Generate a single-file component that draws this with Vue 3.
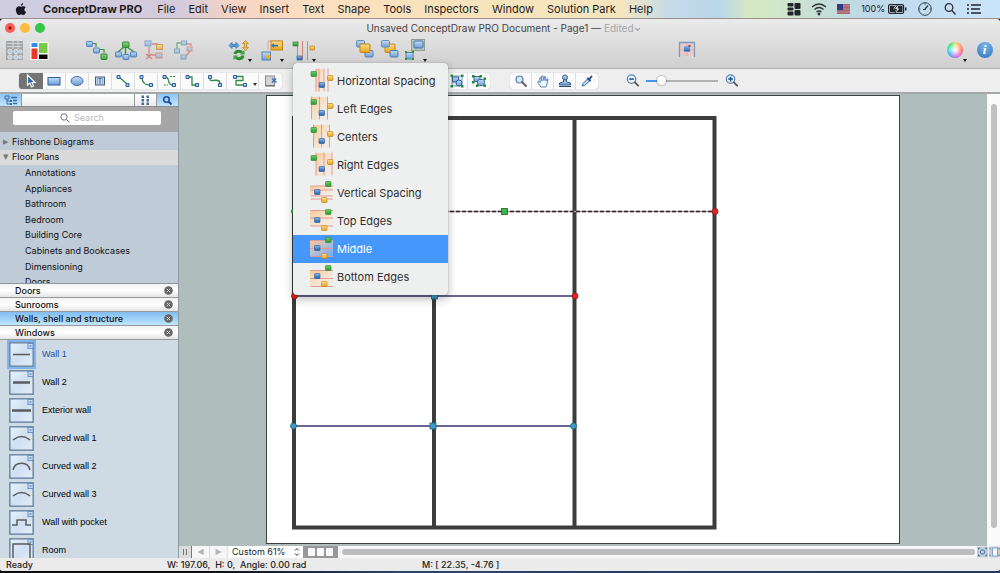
<script setup>
import { ref } from 'vue'

const menus = ['File', 'Edit', 'View', 'Insert', 'Text', 'Shape', 'Tools', 'Inspectors', 'Window', 'Solution Park', 'Help']

const drawTools = [
  ['arrow', 'Select'], ['rect', 'Rectangle'], ['ellipse', 'Ellipse'], ['textbox', 'Text box'],
  ['c1', 'Direct connector'], ['c2', 'Arc connector'], ['c3', 'Bezier connector'],
  ['c4', 'Smart connector'], ['c5', 'Curve connector'], ['c6', 'Round connector'], ['insert', 'Insert page'],
]
const activeTool = ref('arrow')

const alignItems = [
  { label: 'Horizontal Spacing', dir: 'v', lines: [6, 9, 14, 18] },
  { label: 'Left Edges', dir: 'v', lines: [1.5, 9.5, 17.5] },
  { label: 'Centers', dir: 'v', lines: [3.5, 11.5, 19.5] },
  { label: 'Right Edges', dir: 'v', lines: [6, 14, 22] },
  { label: 'Vertical Spacing', dir: 'h', lines: [5, 9, 15, 18] },
  { label: 'Top Edges', dir: 'h', lines: [1.5, 9, 17] },
  { label: 'Middle', dir: 'h', lines: [3.5, 11.5, 19.5] },
  { label: 'Bottom Edges', dir: 'h', lines: [5.5, 13.5, 21.5] },
]
const hovered = ref('Middle')

const treeItems = ['Annotations', 'Appliances', 'Bathroom', 'Bedroom', 'Building Core', 'Cabinets and Bookcases', 'Dimensioning', 'Doors']
const libraries = ['Doors', 'Sunrooms', 'Walls, shell and structure', 'Windows']
const activeLibrary = ref('Walls, shell and structure')

const shapes = [
  { name: 'Wall 1', d: 'M4 12.500H21', w: 1.5 },
  { name: 'Wall 2', d: 'M4 12.500H21', w: 2.5 },
  { name: 'Exterior wall', d: 'M3 12.500H22', w: 2.5 },
  { name: 'Curved wall 1', d: 'M4 14Q12.500 7 21 14', w: 1.5 },
  { name: 'Curved wall 2', d: 'M4 16C6 7 19 7 21 16', w: 1.5 },
  { name: 'Curved wall 3', d: 'M4 14Q12.500 7 21 14', w: 1.5 },
  { name: 'Wall with pocket', d: 'M3 15H8V10H17V15H22', w: 1.5 },
  { name: 'Room', d: 'M4 6H21V21H4Z', w: 1.5 },
]
const activeShape = ref('Wall 1')
const zoom = ref(18)
</script>

<template>
  <div class="screen">
    <svg class="sprite" aria-hidden="true">
      <defs>
        <linearGradient id="gb" x2="0" y2="1"><stop offset="0" stop-color="#c4dcf5" /><stop offset="1" stop-color="#6d9ed3" /></linearGradient>
        <linearGradient id="gg" x2="0" y2="1"><stop offset="0" stop-color="#8fd67c" /><stop offset="1" stop-color="#45a53c" /></linearGradient>
        <linearGradient id="go" x2="0" y2="1"><stop offset="0" stop-color="#ffe08a" /><stop offset="1" stop-color="#e9a21b" /></linearGradient>
        <linearGradient id="gd" x2="0" y2="1"><stop offset="0" stop-color="#8dbbee" /><stop offset="1" stop-color="#1b5fb4" /></linearGradient>
        <linearGradient id="gk" x2="0" y2="1"><stop offset="0" stop-color="#6fcf69" /><stop offset="1" stop-color="#229a2e" /></linearGradient>
        <linearGradient id="gs" x2="1" y2="1"><stop offset="0" stop-color="#f9c792" /><stop offset="1" stop-color="#fbe9d8" stop-opacity=".2" /></linearGradient>
        <linearGradient id="gt" x2="1" y2="1"><stop offset="0" stop-color="#e9f2fa" /><stop offset=".5" stop-color="#cfe0f2" /><stop offset="1" stop-color="#e3edf8" /></linearGradient>
      </defs>

      <symbol id="library" viewBox="0 0 24 24">
        <rect x="4" y="3" width="17" height="19" fill="#a2a4a6" />
        <path d="M5 5.500H20M5 8.500H20M11 3V11M16 3V11" stroke="#d6d7d8" />
        <g fill="#b9cbdc" stroke="#dfe3e6"><circle cx="8" cy="13.500" r="2.200" /><circle cx="14" cy="13.500" r="2.200" /><circle cx="18.500" cy="13.500" r="1.700" /><circle cx="8" cy="19" r="2.200" /><circle cx="14" cy="19" r="2.200" /><circle cx="18.500" cy="19" r="1.700" /></g>
      </symbol>
      <symbol id="solutions" viewBox="0 0 24 24">
        <rect x="3.500" y="4" width="18" height="18" rx="1" fill="#fff" />
        <path d="M4.500 5H10.500V9H4.500Z" fill="#2f8cf0" /><path d="M12 5H20.500V15H12Z" fill="#79c84a" /><path d="M4.500 10.500H10.500V21H4.500Z" fill="#e8382a" /><path d="M12 16.500H20.500V21H12Z" fill="#050505" />
      </symbol>
      <symbol id="chain" viewBox="0 0 24 24">
        <path d="M7 5.500H11V9M14 11.500H19V15" fill="none" stroke="#3f9442" stroke-width="1.200" />
        <g stroke="#4f83bd" fill="url(#gb)"><rect x="1.500" y="3.500" width="6" height="5" rx=".7" /><rect x="8.500" y="10" width="6" height="5" rx=".7" /></g><rect x="16" y="16" width="6" height="5.500" rx=".7" stroke="#2f8a33" fill="url(#gg)" />
      </symbol>
      <symbol id="tree" viewBox="0 0 24 24">
        <path d="M10 9L4 14M11.500 9V16M13 9L20 14" stroke="#3f9442" stroke-width="1.500" />
        <rect x="8.500" y="4" width="6.500" height="5.500" rx=".7" stroke="#2f8a33" fill="url(#gg)" />
        <g stroke="#4f83bd" fill="url(#gb)"><rect x="1.500" y="14" width="6" height="5" rx=".7" /><rect x="9" y="16.500" width="6" height="5" rx=".7" /><rect x="16.500" y="14" width="6" height="5" rx=".7" /></g>
      </symbol>
      <symbol id="swap" viewBox="0 0 24 24">
        <g opacity=".65">
          <path d="M6 9V19M3 16L9 21M9 16L3 21M9 6H15M9 17H15" stroke="#d45b4e" stroke-width="1.300" />
          <rect x="2" y="3" width="6" height="5" stroke="#4f83bd" fill="url(#gb)" /><rect x="13.500" y="6.500" width="6" height="5" stroke="#c58118" fill="url(#go)" /><rect x="13" y="15" width="6" height="5" stroke="#d46a60" fill="url(#gb)" />
        </g>
      </symbol>
      <symbol id="cycle" viewBox="0 0 24 24">
        <g opacity=".6">
          <path d="M15 6H19V8M19 12L14 18H9" fill="none" stroke="#d45b4e" stroke-width="1.300" /><path d="M5 11V5H9" fill="none" stroke="#3f9442" stroke-width="1.300" />
          <g stroke="#4f83bd" fill="url(#gb)"><rect x="9.500" y="3" width="5" height="4" /><rect x="2.500" y="11" width="5" height="4" /><rect x="9" y="17" width="5" height="4" /></g><rect x="15" y="9" width="5" height="4" stroke="#d46a60" fill="url(#gb)" />
        </g>
      </symbol>
      <symbol id="rotate" viewBox="0 0 24 24">
        <path d="M1 7.500L4 4.500V6.500H8V4.500L11 7.500L8 10.500V8.500H4V10.500Z" fill="#5fa5e6" stroke="#1f64a8" stroke-width=".7" />
        <path d="M17.500 2.500L20.500 5.500H18.500V9.500H20.500L17.500 12.500L14.500 9.500H16.500V5.500H14.500Z" fill="#f8c24c" stroke="#b97d12" stroke-width=".7" />
        <path d="M7 16A4 3.500 0 0 1 14 14.500M15 17.500A4 3.500 0 0 1 8 19.500" fill="none" stroke="#318a36" stroke-width="3" /><path d="M12 16.500H16.500V12ZM10 17.500H5.500V22Z" fill="#3da43c" />
      </symbol>
      <symbol id="moveto" viewBox="0 0 24 24">
        <path d="M8 12V3H20" fill="none" stroke="#e0a29c" /><rect x="11" y="3" width="11.500" height="9" fill="url(#go)" stroke="#c58118" /><path d="M11 7.500L14 5V6.700H18V8.500H14V10Z" fill="#2878c0" />
        <rect x="2" y="14" width="8.500" height="8" fill="url(#gb)" stroke="#4f83bd" /><path d="M5 17.500H8V15.500L11 18.500L8 21.500V19.500H5Z" fill="#f5ad27" />
      </symbol>
      <symbol id="alignbtn" viewBox="0 0 24 24">
        <path d="M5.500 3V22M10.500 3V22M15.500 3V22" stroke="#d6817c" /><rect x="1" y="4" width="5" height="4" fill="url(#gk)" stroke="#28762b" stroke-width=".6" /><rect x="18" y="8" width="4.500" height="4" fill="url(#go)" stroke="#b97d12" stroke-width=".6" /><rect x="5" y="18" width="5" height="4" fill="url(#gd)" stroke="#245993" stroke-width=".6" />
      </symbol>
      <symbol id="front" viewBox="0 0 24 24">
        <rect x="3.500" y="2.500" width="8" height="6.500" rx="1" fill="url(#gb)" stroke="#5f8dbd" /><rect x="12" y="12.500" width="8" height="6.500" rx="1" fill="url(#gb)" stroke="#4f7fb1" /><rect x="7" y="6" width="10" height="8.500" rx="1" fill="url(#go)" stroke="#c58118" />
      </symbol>
      <symbol id="back" viewBox="0 0 24 24">
        <rect x="7" y="6" width="10" height="8.500" rx="1" fill="url(#go)" stroke="#c58118" /><rect x="3.500" y="2.500" width="8" height="6.500" rx="1" fill="url(#gb)" stroke="#5f8dbd" /><rect x="12" y="12.500" width="8" height="6.500" rx="1" fill="url(#gb)" stroke="#4f7fb1" />
      </symbol>
      <symbol id="groupbtn" viewBox="0 0 24 24">
        <path d="M3 13L10 12L12 20Z" fill="#f1b99b" opacity=".7" /><rect x="8.500" y="1.500" width="13" height="11" fill="#bbc9bf" stroke="#8d9a91" /><rect x="11" y="3" width="9" height="7" rx="1" fill="url(#gb)" stroke="#3f73ad" />
        <rect x="3" y="14.500" width="7" height="6.500" fill="url(#gb)" stroke="#4f83bd" /><path d="M2 13H4V15H2ZM9 13H11V15H9ZM2 20H4V22H2ZM9 20H11V22H9Z" fill="#2c932f" />
      </symbol>
      <symbol id="presentation" viewBox="0 0 24 24">
        <path d="M5 5H19V18H5Z" fill="#e7c9cb" /><path d="M4.500 19V4.500H19.500V19" fill="none" stroke="#7b9bbd" stroke-width="1.300" /><path d="M4.500 12H19.500M12 5V18" stroke="#d59b9e" stroke-dasharray="1 1" /><rect x="9" y="8" width="6" height="5.500" fill="url(#gd)" /><path d="M13.500 7H15.500V9H13.500Z" fill="#963f55" />
      </symbol>

      <symbol id="arrow" viewBox="0 0 16 16"><path d="M4.500 2V12L7 10L8.500 14L10.500 13L9 9.500H12Z" fill="#2f62a8" stroke="#f4f8fc" stroke-width="1.200" /></symbol>
      <symbol id="rect" viewBox="0 0 16 16"><rect x="2" y="4.500" width="12" height="7.500" fill="url(#gb)" stroke="#2d5f9c" /></symbol>
      <symbol id="ellipse" viewBox="0 0 16 16"><ellipse cx="8" cy="8" rx="6" ry="4.500" fill="url(#gb)" stroke="#3c70ac" /></symbol>
      <symbol id="textbox" viewBox="0 0 16 16"><rect x="3.500" y="4" width="9" height="8" fill="#c4d7ea" stroke="#44617f" /><path d="M6.500 5.500H9.500M8 5.500V11" stroke="#3975b8" /><path d="M5.500 4V12M10.500 4V12" stroke="#7c96b0" stroke-width=".7" /></symbol>
      <symbol id="c1" viewBox="0 0 16 16"><path d="M4 4L12 11" stroke="#2f8a46" stroke-width="1.300" /><path d="M2 2.500H5V5.500H2ZM11 10.500H14V13.500H11Z" fill="#a9cbee" stroke="#2c5f9f" /></symbol>
      <symbol id="c2" viewBox="0 0 16 16"><path d="M4 4Q4 12 12 12" fill="none" stroke="#2f8a46" stroke-width="1.300" /><path d="M2 2.500H5V5.500H2ZM11.500 10.500H14.500V13.500H11.500Z" fill="#a9cbee" stroke="#2c5f9f" /></symbol>
      <symbol id="c3" viewBox="0 0 16 16"><path d="M4 4C10 4 5 12 12 12" fill="none" stroke="#2f8a46" stroke-width="1.300" /><path d="M3 12H7M9 3.500H14" stroke="#2f8a46" stroke-dasharray="2 1" /><path d="M2 2.500H5V5.500H2ZM11.500 10.500H14.500V13.500H11.500Z" fill="#a9cbee" stroke="#2c5f9f" /></symbol>
      <symbol id="c4" viewBox="0 0 16 16"><path d="M5 4H8V12H12" fill="none" stroke="#2f8a46" stroke-width="1.300" /><path d="M2 2.500H5V5.500H2ZM11.500 10.500H14.500V13.500H11.500Z" fill="#a9cbee" stroke="#2c5f9f" /></symbol>
      <symbol id="c5" viewBox="0 0 16 16"><path d="M3 6Q3 8 6 7.500T11 7.500T13 11" fill="none" stroke="#2f8a46" stroke-width="1.300" /><path d="M1.500 2.500H4.500V5.500H1.500ZM11.500 10.500H14.500V13.500H11.500Z" fill="#a9cbee" stroke="#2c5f9f" /></symbol>
      <symbol id="c6" viewBox="0 0 16 16"><path d="M5 3.500H11V7.500H4V12H12" fill="none" stroke="#2f8a46" stroke-width="1.300" stroke-linejoin="round" /><path d="M1.500 2.500H4.500V5.500H1.500ZM11.500 10.500H14.500V13.500H11.500Z" fill="#a9cbee" stroke="#2c5f9f" /></symbol>
      <symbol id="insert" viewBox="0 0 16 16"><rect x="2.500" y="3" width="9" height="9.500" fill="#d4d4d4" stroke="#8a8a8a" /><path d="M2 13H12" stroke="#666" /><path d="M9 5.500L13.500 9.500M13 5.500L9 9.500" fill="none" stroke="#3574b7" stroke-width="1.500" /></symbol>
      <symbol id="grp" viewBox="0 0 16 16"><rect x="3" y="3" width="10" height="10" fill="#e3edf5" stroke="#7c98b2" /><rect x="3.500" y="4" width="6" height="5" fill="url(#gb)" stroke="#34679d" /><circle cx="10" cy="10" r="3" fill="url(#gb)" stroke="#34679d" /><path d="M1.500 1.500H4V4H1.500ZM12 1.500H14.500V4H12ZM1.500 12H4V14.500H1.500ZM12 12H14.500V14.500H12Z" fill="#238d35" /></symbol>
      <symbol id="ungrp" viewBox="0 0 16 16"><rect x="3" y="3.500" width="6" height="5" fill="url(#gb)" stroke="#34679d" /><rect x="6.500" y="6.500" width="7" height="6" rx="2" fill="url(#gb)" stroke="#34679d" /><path d="M1 2H3.500V4.500H1ZM8.500 2H11V4.500H8.500ZM12.500 4.500H15V7H12.500ZM1 8H3.500V10.500H1ZM5 11.500H7.500V14H5ZM12.500 11.500H15V14H12.500Z" fill="#238d35" /></symbol>
      <symbol id="lens" viewBox="0 0 16 16"><circle cx="6.500" cy="6.500" r="3.500" fill="#d5e7fa" stroke="#5481b0" stroke-width="1.200" /><path d="M9 9L13 13" stroke="#6a5f5a" stroke-width="2" stroke-linecap="round" /></symbol>
      <symbol id="hand" viewBox="0 0 16 16"><path d="M6 14L3 10L3 8L5.500 9.500L4.500 5L5.500 4.500L7 8L6.500 3H8L9 7.500L9.500 3.500H10.500L11 8L12.500 5.500L13 6L12 11L11 14Z" fill="#f4f8fc" stroke="#4a7cb4" stroke-width=".9" /></symbol>
      <symbol id="stamp" viewBox="0 0 16 16"><circle cx="8" cy="4.500" r="2.500" fill="url(#gb)" stroke="#34618f" /><path d="M6.500 7H9.500V9L13.500 10V12H2.500V10L6.500 9Z" fill="url(#gb)" stroke="#34618f" /><path d="M2 13.500H14" stroke="#33475e" /></symbol>
      <symbol id="dropper" viewBox="0 0 16 16"><path d="M3.500 13L4 10.500L9 5.500L11 7.500L5.500 12.500Z" fill="#c7dff6" stroke="#3568a5" /><path d="M9 5.500L11 7.500M10.500 6L12.500 3.500" stroke="#26518a" stroke-width="2" stroke-linecap="round" /></symbol>
      <symbol id="zout" viewBox="0 0 16 16"><circle cx="7" cy="6.500" r="4.500" fill="#e6f1fb" stroke="#5583b3" stroke-width="1.300" /><path d="M4.500 6.500H9.500" stroke="#205696" stroke-width="1.600" /><path d="M10.500 10L14 13.500" stroke="#62584d" stroke-width="2" stroke-linecap="round" /></symbol>
      <symbol id="zin" viewBox="0 0 16 16"><circle cx="7" cy="6.500" r="4.500" fill="#e6f1fb" stroke="#5583b3" stroke-width="1.300" /><path d="M4.500 6.500H9.500M7 4V9" stroke="#205696" stroke-width="1.600" /><path d="M10.500 10L14 13.500" stroke="#62584d" stroke-width="2" stroke-linecap="round" /></symbol>
    </svg>

    <nav class="menubar" aria-label="System menu">
      <svg class="apple" viewBox="0 0 12 14"><path d="M8.300 0C8.400 1.600 7.200 3 5.900 3C5.800 1.500 7 .2 8.300 0ZM8.500 3.500C9.500 3.500 10.500 4 11 4.900C9 6.200 9.400 8.900 11.400 9.700C10.900 11 9.900 13 8.600 13C7.700 13 7.300 12.500 6.200 12.500C5.100 12.500 4.700 13 3.800 13C2.100 13 .3 9.800 .5 7.300C.7 4.900 2.200 3.600 3.800 3.600C4.800 3.600 5.500 4.100 6.200 4.100C6.800 4.100 7.500 3.500 8.500 3.500Z" fill="#181622" /></svg>
      <button class="app-name">ConceptDraw PRO</button>
      <button v-for="m in menus" :key="m" class="menu">{{ m }}</button>
      <div class="tray">
        <svg width="14" height="14" viewBox="0 0 14 14" fill="#22262c"><rect x=".5" y="1" width="6" height="3.500" rx="1" /><rect x=".5" y="5.500" width="6" height="3" rx="1" /><rect x=".5" y="9.500" width="6" height="4" rx="1" /><rect x="7.500" y="1" width="6" height="6" rx="1" /><rect x="7.500" y="8" width="6" height="5.500" rx="1" /></svg>
        <svg width="16" height="14" viewBox="0 0 16 14" fill="none" stroke="#2c3138" stroke-width="1.300"><path d="M1 5Q8 -1 15 5M3.500 7.500Q8 3.500 12.500 7.500M5.500 10Q8 8 10.500 10" /><circle cx="8" cy="12" r=".8" fill="#2c3138" /></svg>
        <svg width="14" height="10" viewBox="0 0 14 10"><path d="M0 0H13V10H0Z" fill="#a8666f" /><path d="M6 2H13M6 5H13M0 8H13" stroke="#b98a92" /><path d="M0 0H6V6H0Z" fill="#343b84" /></svg>
        <span>100%</span>
        <svg width="19" height="10" viewBox="0 0 19 10"><rect x=".6" y=".6" width="15" height="8.800" rx="1.500" fill="#c9d8e6" stroke="#22262c" stroke-width="1.200" /><path d="M2 2H7L5 5.500H7V8H2ZM10 2H14.500V8H8.500L11.500 4.500H10Z" fill="#22262c" /><path d="M9.500 1L6 5.500H8.500L7 9" fill="none" stroke="#22262c" /><rect x="17" y="3.500" width="1.500" height="3" fill="#22262c" /></svg>
        <svg width="16" height="16" viewBox="0 0 16 16" fill="none" stroke="#333941"><circle cx="8" cy="8" r="6.300" /><path d="M8 8L11 4.500M6 8.500H9" stroke-width="1.200" /><path d="M8 2V4M14 8H12.500M2 8H3.500" stroke-width=".7" /></svg>
        <svg width="14" height="14" viewBox="0 0 14 14" fill="none" stroke="#2c3138" stroke-width="1.300"><circle cx="6" cy="5.500" r="3.800" /><path d="M9 8.500L12.500 12.500" /></svg>
        <svg width="15" height="12" viewBox="0 0 15 12" stroke="#22262c" stroke-width="1.500"><path d="M0 2H2M4 2H14M0 6H2M4 6H13M0 10H2M4 10H14" /></svg>
      </div>
    </nav>

    <div class="window">
      <header class="chrome">
        <div class="titlebar">
          <div class="lights">
            <button class="light red" aria-label="Close"></button>
            <button class="light yellow" aria-label="Minimize"></button>
            <button class="light green" aria-label="Zoom window"></button>
          </div>
          <div class="title">Unsaved ConceptDraw PRO Document - Page1 — <span>Edited</span>
            <svg width="7" height="5" viewBox="0 0 7 5"><path d="M1 1L3.500 3.500L6 1" fill="none" stroke="#a7a7a7" stroke-width="1.200" /></svg>
          </div>
        </div>

        <div class="toolbar">
          <div class="tools-a">
            <button v-for="i in ['library', 'solutions']" :key="i" :aria-label="i"><svg><use :href="'#' + i" /></svg></button>
          </div>
          <div class="tools-b">
            <button v-for="i in ['chain', 'tree', 'swap', 'cycle']" :key="i" :aria-label="i"><svg><use :href="'#' + i" /></svg></button>
          </div>
          <div class="tools-c">
            <button class="drop" aria-label="Rotate and flip"><svg><use href="#rotate" /></svg></button>
            <button class="drop" aria-label="Move to"><svg><use href="#moveto" /></svg></button>
            <button class="drop" aria-label="Align" aria-haspopup="menu" aria-expanded="true"><svg><use href="#alignbtn" /></svg></button>
            <div class="popup" role="menu">
              <button v-for="a in alignItems" :key="a.label" role="menuitem" class="popup-item" :class="{ hot: hovered === a.label }" @mouseenter="hovered = a.label">
                <svg viewBox="0 0 24 24">
                  <template v-if="a.dir === 'v'">
                    <rect :x="a.lines[0]" y="0" :width="a.lines[2] - a.lines[0]" height="23" fill="url(#gs)" />
                    <path v-for="l in a.lines" :key="l" :d="`M${l} -.5V22.500`" stroke="#e39a94" />
                    <rect x="1" y="2.500" width="5.500" height="5" rx=".7" fill="url(#gk)" stroke="#28862b" stroke-width=".6" />
                    <rect x="9" y="13.500" width="5.500" height="5" rx=".7" fill="url(#gd)" stroke="#245993" stroke-width=".6" />
                    <rect x="17.500" y="6.500" width="5.500" height="5" rx=".7" fill="url(#go)" stroke="#b97d12" stroke-width=".6" />
                  </template>
                  <template v-else>
                    <rect x="0" :y="a.lines[0]" width="23" :height="a.lines[2] - a.lines[0]" fill="url(#gs)" />
                    <path v-for="l in a.lines" :key="l" :d="`M.5 ${l}H23`" stroke="#e39a94" />
                    <rect x="15.500" y=".5" width="5.500" height="5" rx=".7" fill="url(#gk)" stroke="#28862b" stroke-width=".6" />
                    <rect x="4.500" y="8.500" width="5.500" height="5" rx=".7" fill="url(#gd)" stroke="#245993" stroke-width=".6" />
                    <rect x="11.500" y="16.500" width="5.500" height="5" rx=".7" fill="url(#go)" stroke="#b97d12" stroke-width=".6" />
                  </template>
                </svg>
                {{ a.label }}
              </button>
            </div>
          </div>
          <div class="tools-d">
            <button aria-label="Bring to front"><svg><use href="#front" /></svg></button>
            <button aria-label="Send to back"><svg><use href="#back" /></svg></button>
            <button class="drop" aria-label="Group"><svg><use href="#groupbtn" /></svg></button>
          </div>
          <div class="tools-e"><button aria-label="Presentation"><svg><use href="#presentation" /></svg></button></div>
          <div class="tools-f">
            <button class="drop" aria-label="Colors"><i class="wheel"></i></button>
            <button aria-label="Info"><i class="info">i</i></button>
          </div>
        </div>
      </header>

      <div class="subbar">
        <div class="seg seg-draw">
          <button v-for="[id, label] in drawTools" :key="id" :class="[{ on: activeTool === id }, 't-' + id]" :aria-label="label" @click="activeTool = id"><svg><use :href="'#' + id" /></svg></button>
        </div>
        <div class="seg seg-group">
          <button aria-label="Group objects"><svg><use href="#grp" /></svg></button>
          <button aria-label="Ungroup objects"><svg><use href="#ungrp" /></svg></button>
        </div>
        <div class="seg seg-view">
          <button v-for="i in ['lens', 'hand', 'stamp', 'dropper']" :key="i" :aria-label="i"><svg><use :href="'#' + i" /></svg></button>
        </div>
        <div class="zoomer">
          <button aria-label="Zoom out"><svg><use href="#zout" /></svg></button>
          <input v-model="zoom" type="range" min="0" max="100" aria-label="Zoom">
          <button aria-label="Zoom in"><svg><use href="#zin" /></svg></button>
        </div>
      </div>

      <div class="body">
        <aside class="sidebar">
          <div class="tabs">
            <button class="tab on" aria-label="Library tree"><svg width="14" height="10" viewBox="0 0 14 10"><path d="M1 1H5V4H1ZM3 4V9H6M3 6H6" fill="none" stroke="#376da8" /><path d="M7 2.500H13M9 5.500H13M9 8.500H13" stroke="#376da8" stroke-width="1.300" /><path d="M6 5H8V7H6ZM6 8H8V10H6Z" fill="#376da8" /></svg></button>
            <div class="tab-space"></div>
            <button class="tab" aria-label="Grid"><svg width="9" height="10" viewBox="0 0 9 10"><path d="M.5 .5H3V3H.5ZM5.500 .5H8V3H5.500ZM.5 4H3V6.500H.5ZM5.500 4H8V6.500H5.500ZM.5 7.500H3V10H.5ZM5.500 7.500H8V10H5.500Z" fill="#476c9c" /></svg></button>
            <button class="tab on" aria-label="Find"><svg width="11" height="11" viewBox="0 0 11 11"><circle cx="4.500" cy="4.500" r="2.800" fill="none" stroke="#1b4fa0" stroke-width="1.600" /><path d="M6.500 6.500L9.500 9.500" stroke="#1b4fa0" stroke-width="2" /></svg></button>
          </div>
          <div class="search">
            <label class="search-box">
              <svg width="10" height="10" viewBox="0 0 10 10" fill="none" stroke="#777"><circle cx="4" cy="4" r="3.200" /><path d="M6.500 6.500L9.500 9.500" /></svg>
              <input type="search" placeholder="Search" aria-label="Search">
            </label>
          </div>
          <div class="tree-clip">
            <ul class="tree">
              <li class="parent"><i>▶</i>Fishbone Diagrams</li>
              <li class="parent open"><i>▼</i>Floor Plans</li>
              <li v-for="t in treeItems" :key="t" class="leaf">{{ t }}</li>
            </ul>
          </div>
          <div class="libraries">
            <div v-for="l in libraries" :key="l" class="library" :class="{ on: activeLibrary === l }">
              <button class="library-name" @click="activeLibrary = l">{{ l }}</button>
              <button class="library-close" :aria-label="'Close ' + l"><svg width="9" height="9" viewBox="0 0 9 9"><circle cx="4.500" cy="4.500" r="4.300" fill="#666" /><path d="M2.800 2.800L6.200 6.200M6.200 2.800L2.800 6.200" stroke="#d5d5d5" /></svg></button>
            </div>
          </div>
          <div class="shapes">
            <button v-for="s in shapes" :key="s.name" class="shape" :class="{ on: activeShape === s.name }" @click="activeShape = s.name">
              <svg viewBox="0 0 25 25"><rect x=".8" y=".8" width="23.400" height="23.400" fill="url(#gt)" stroke="#7089a5" stroke-width="1.500" /><rect x="19" y="1.500" width="5" height="5" fill="#c9def2" stroke="#6b93c0" /><path d="M20.500 4L22.500 4" stroke="#3b6dac" /><path :d="s.d" :stroke-width="s.w" fill="none" stroke="#5a5c5e" /></svg>
              <span>{{ s.name }}</span>
            </button>
          </div>
        </aside>

        <section class="work">
          <div class="view">
            <div class="canvas">
              <svg class="paper" viewBox="266 95 635 449">
                <rect x="266.500" y="95.500" width="633" height="448" fill="#fff" stroke="#3b4143" />
                <g fill="none" stroke="#3c3c3d" stroke-width="4"><path d="M294 118H714.500V527.500H294ZM434 118V527M574.500 118V527" /></g>
                <path d="M294 296H575M294 426H574" stroke="#39366d" stroke-width="1.500" />
                <path d="M294 211.500H715" stroke="#a5a5a5" stroke-width="1.500" /><path d="M294 211.500H715" stroke="#33202a" stroke-width="1.500" stroke-dasharray="4 2" />
                <g fill="#39b54a" stroke="#1c6b28" stroke-width=".8"><rect x="501.500" y="208.500" width="6" height="6" /><circle cx="294.500" cy="211.500" r="3" /></g>
                <g fill="#e5231f" stroke="#8f1513" stroke-width=".8"><circle cx="715" cy="211.500" r="3" /><circle cx="575" cy="296" r="3" /><circle cx="294.500" cy="296" r="3" /></g>
                <g fill="#3c9cc6" stroke="#1d5f85" stroke-width=".8"><rect x="431.500" y="293" width="6" height="6" /><circle cx="293.500" cy="426" r="3" /><rect x="430" y="423" width="6" height="6" /><circle cx="573.500" cy="426" r="3" /></g>
              </svg>
            </div>
            <div class="vscroll"><i></i></div>
          </div>
          <div class="pagebar">
            <button class="split" aria-label="Split"><i></i></button>
            <button class="nav" aria-label="Previous page">◀</button>
            <button class="nav" aria-label="Next page">▶</button>
            <label class="zoom-select">
              <select aria-label="Zoom level"><option>Custom 61%</option></select>
              <svg width="6" height="10" viewBox="0 0 6 10"><path d="M1 3.500L3 1.500L5 3.500M1 6.500L3 8.500L5 6.500" fill="none" stroke="#333" /></svg>
            </label>
            <button class="pages" aria-label="Pages"><i></i><i></i><i></i></button>
            <div class="hscroll"><i></i></div>
            <svg class="fit" viewBox="0 0 23 11"><path d="M0 0H11V11H0ZM12 0H23V11H12Z" fill="#c5cdd5" /><g fill="none" stroke="#3f76b5"><circle cx="5.500" cy="5.500" r="2.200" /><path d="M1.500 3V1.500H3M8 1.500H9.500V3M9.500 8V9.500H8M3 9.500H1.500V8" /></g><path d="M15.500 1.500H20.500V9.500H15.500Z" fill="#fff" stroke="#7fa3c8" /><path d="M13 3V1.500M22 3V1.500M13 8V9.500M22 8V9.500" stroke="#3f76b5" /></svg>
          </div>
        </section>
      </div>

      <footer class="status">
        <span class="s-ready">Ready</span>
        <span class="s-size">W: 197.06,&nbsp; H: 0,&nbsp; Angle: 0.00 rad</span>
        <span class="s-mouse">M: [ 22.35, -4.76 ]</span>
      </footer>
    </div>
  </div>
</template>

<style>
html, body { margin: 0; background: #20242c; }
</style>

<style scoped>
.screen { display: flex; flex-direction: column; height: 100vh; overflow: hidden; font: 11px/14px Inter, "Liberation Sans", sans-serif; color: #1c1c1c; background: linear-gradient(90deg, #0b0b10 20%, #2c4468 40%, #26395c); }
button { border: 0; padding: 0; margin: 0; background: none; font: inherit; color: inherit; display: flex; align-items: center; justify-content: center; }
.sprite { position: absolute; width: 0; height: 0; }
svg { flex: none; }

.menubar { display: flex; align-items: center; height: 18px; flex: none; gap: 13px; padding: 0 18px 0 15px; white-space: nowrap; border-bottom: 1px solid #9a8f8d; background: linear-gradient(90deg, #cfccdf 0, #d3cbdc 18%, #f6d3c4 23%, #fbdfc0 31%, #f8e3bb 45%, #f5e6bf 62%, #c5dbe8 67%, #b9d7ea 72%, #d7e9c2 75%, #cbe2d0 80%, #bdd8e9 87%, #cbe6fb); }
.apple { width: 12px; height: 13px; }
.app-name { font-weight: 700; margin: 0 2px 0 3px; }
.tray { display: flex; align-items: center; gap: 10px; margin-left: auto; }
.tray span { font-size: 9px; margin-right: -7px; }

.window { display: flex; flex-direction: column; flex: 1; min-height: 0; margin-bottom: 2px; background: #ececec; border-radius: 4px 4px 3px 3px; }
.chrome { flex: none; background: linear-gradient(#ebebeb, #cfcfcf); border-bottom: 1px solid #b2b2b2; border-radius: 4px 4px 0 0; }
.titlebar { position: relative; display: flex; align-items: center; justify-content: center; height: 17px; }
.lights { position: absolute; left: 5px; display: flex; gap: 5px; }
.light { width: 10px; height: 10px; border-radius: 50%; }
.red { background: radial-gradient(circle, #7b0f0a 0 1px, #fb5b57 2px); }
.yellow { background: #fdbc40; }
.green { background: #34c648; }
.title { font-size: 10px; color: #444; padding-left: 7px; }
.title span { color: #a5a5a5; }

.toolbar { display: flex; box-sizing: border-box; height: 32px; align-items: flex-start; padding: 2px 3px 0 1px; }
.toolbar > div { display: flex; }
.toolbar > div > button { position: relative; width: 25px; height: 24px; }
.toolbar button > svg { width: 24px; height: 24px; }
.drop::after { content: ""; position: absolute; right: 0; bottom: 0; border: 2px solid transparent; border-top: 3px solid #111; border-bottom: 0; }
.tools-b { margin-left: 33px; gap: 4px; }
.tools-c { margin-left: 31px; gap: 7px; position: relative; }
.tools-d { margin-left: 36px; }
.tools-e { margin-left: 247px; }
.tools-f { margin-left: auto; gap: 5px; }
.wheel { width: 16px; height: 16px; border-radius: 50%; background: radial-gradient(circle, #fff 5%, transparent 75%), conic-gradient(#ffcf6b, #ff5a4a 25%, #ef4fd4 40%, #a95df0 50%, #2b9cf0 65%, #1ed8d6 75%, #33dc60 90%, #c4e85a); }
.info { width: 16px; height: 16px; border-radius: 50%; background: radial-gradient(circle at 50% 25%, #7db7ea, #2a72bd); color: #fff; font: italic 700 13px/16px "Liberation Serif", serif; text-align: center; }

.popup { position: absolute; z-index: 5; left: 66px; top: 25px; width: 155px; padding: 4px 0; border-radius: 4px; background: #eeefef; box-shadow: 0 0 1px rgba(0, 0, 0, .5), 0 4px 10px rgba(0, 0, 0, .28); }
.popup-item { width: 100%; height: 28px; justify-content: flex-start; gap: 3px; padding-left: 17px; color: #303030; white-space: nowrap; }
.popup-item.hot { background: #4597fb; color: #fff; }
.popup-item svg { overflow: visible; }

.subbar { display: flex; align-items: center; flex: none; height: 23px; padding-left: 19px; background: #eeeeee; border-bottom: 2px solid #a4a9a8; }
.seg { display: flex; height: 16px; background: #fbfbfb; border-radius: 3px; box-shadow: 0 0 1px rgba(0, 0, 0, .3); overflow: hidden; }
.seg button { width: 22px; border-right: 1px solid #dedede; }
.seg button:last-child { border-right: 0; }
.seg svg { width: 16px; height: 16px; }
.seg-draw button { width: 23px; }
.seg-draw .t-arrow { width: 24px; border: 0; }
.seg-draw .on { background: #747474; }
.seg-draw .t-c6 { position: relative; width: 32px; justify-content: flex-start; padding-left: 5px; }
.t-c6::after { content: ""; position: absolute; right: 1px; bottom: 3px; border: 2px solid transparent; border-top: 3px solid #333; border-bottom: 0; }
.seg-group { margin-left: 164px; }
.seg-view { margin-left: 20px; }
.zoomer { display: flex; align-items: center; gap: 6px; margin-left: 27px; }
.zoomer svg { width: 15px; height: 15px; }
.zoomer input { appearance: none; width: 72px; height: 10px; margin: 0; background: linear-gradient(90deg, #3f97f5 20%, #b1b1b1 20%) center / 100% 2px no-repeat; }
.zoomer input::-webkit-slider-thumb { appearance: none; width: 9px; height: 9px; border-radius: 50%; background: #fff; box-shadow: 0 0 1px 1px rgba(0, 0, 0, .2); }

.body { display: flex; flex: 1; min-height: 0; }
.sidebar { display: flex; flex-direction: column; flex: none; width: 178px; border-right: 1px solid #8e9b9e; background: #cedbe5; }
.tabs { display: flex; flex: none; height: 12px; border-bottom: 1px solid #8d8d8d; background: linear-gradient(#fff, #ebebeb); }
.tab { width: 22px; border-left: 1px solid #9b9b9b; box-sizing: border-box; }
.tab:first-child { border-left: 0; border-right: 1px solid #8b9bab; }
.tab-space { flex: 1; }
.tab.on { background: linear-gradient(#8cc3f6, #c3e6fd); }
.search { flex: none; height: 25px; box-sizing: border-box; padding: 4px 17px 0 13px; background: #a6a6a6; }
.search-box { display: flex; align-items: center; height: 14px; padding-left: 47px; gap: 4px; border-radius: 2px; background: #fff; }
.search-box input { border: 0; outline: 0; padding: 0; min-width: 0; flex: 1; background: none; font: 9px/12px Inter, sans-serif; }
.search-box input::placeholder { color: #b9b9b9; }
.tree-clip { flex: none; height: 151px; overflow: hidden; background: #bfccd8; border-bottom: 1px solid #8f979e; }
.tree { display: grid; grid-template-rows: repeat(10, 1fr); height: 156px; margin: 2px 0 0; padding: 0; list-style: none; font-size: 9px; color: #111; }
.tree li { display: flex; align-items: center; padding-left: 25px; min-height: 0; }
.tree .parent { padding-left: 3px; }
.parent i { width: 9px; font: 7px/10px "DejaVu Sans", sans-serif; color: #777; }
.tree .open { background: #dadada; }

.libraries { flex: none; }
.library { display: flex; align-items: center; height: 14px; box-sizing: border-box; padding: 0 5px 0 15px; border-bottom: 1px solid #999; background: linear-gradient(#f2f2f2, #fff 50%, #e4e4e4); font: 500 9px/13px Inter, sans-serif; color: #111; }
.library.on { background: linear-gradient(#80bdf2, #bfe6ff); }
.library-name { flex: 1; justify-content: flex-start; }
.shapes { flex: 1; min-height: 0; overflow: hidden; }
.shape { width: 100%; height: 28px; justify-content: flex-start; gap: 8px; padding-left: 9px; font: 9px/12px "Liberation Sans", Arial, sans-serif; color: #000; }
.shape svg { width: 25px; height: 25px; }
.shape.on { color: #1b4fa8; }
.shape.on svg { box-shadow: 0 0 0 2px #7fb3ee; }

.work { display: flex; flex-direction: column; flex: 1; min-width: 0; }
.view { display: flex; flex: 1; min-height: 0; }
.canvas { flex: 1; min-width: 0; overflow: hidden; background: #afbebc; padding: 1px 0 0 87px; }
.paper { display: block; width: 635px; height: 449px; }
.vscroll { display: flex; justify-content: center; width: 13px; padding: 10px 0 18px; box-sizing: border-box; background: #fafafa; }
.vscroll i { width: 6px; border-radius: 3px; background: #c1c1c1; }
.pagebar { display: flex; align-items: stretch; flex: none; height: 12px; background: #f6f6f6; }
.split { width: 13px; border-right: 1px solid #777; background: #dcdcdc; box-sizing: border-box; }
.split i { width: 2px; height: 6px; border: solid #777; border-width: 0 1px; }
.nav { width: 18px; font: 8px/10px "DejaVu Sans", sans-serif; color: #b5b5b5; border-right: 1px solid #ddd; box-sizing: border-box; }
.zoom-select { display: flex; align-items: center; width: 75px; padding: 0 3px 0 4px; box-sizing: border-box; background: #fff; }
.zoom-select select { appearance: none; border: 0; padding: 0; flex: 1; min-width: 0; background: none; font: 9px/12px Inter, sans-serif; color: #222; }
.pages { width: 35px; gap: 2px; background: #989898; }
.pages i { width: 7px; height: 8px; border-radius: 1px; background: #fafafa; }
.hscroll { display: flex; align-items: center; flex: 1; padding: 0 2px 0 4px; }
.hscroll i { flex: 1; height: 6px; border-radius: 3px; background: #bdbdbd; }
.fit { width: 23px; height: 12px; }

.status { display: flex; flex: none; height: 13px; align-items: center; padding-left: 6px; background: #ebebeb; border-radius: 0 0 3px 3px; font: 500 9px/12px Inter, sans-serif; color: #222; }
.s-ready { width: 161px; }
.s-size { width: 255px; }
</style>
